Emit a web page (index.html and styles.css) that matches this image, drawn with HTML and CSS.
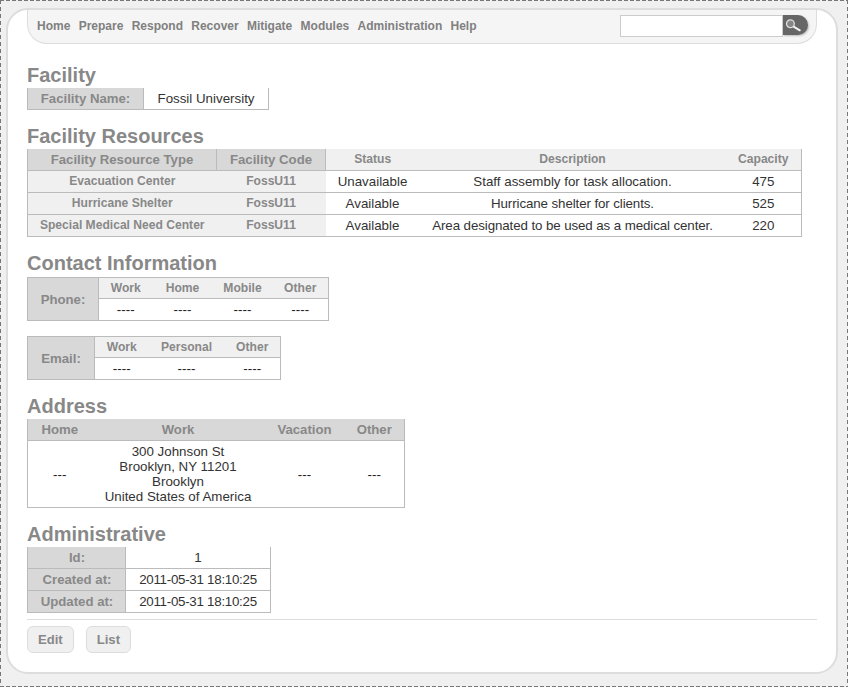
FILE: index.html
```html
<!DOCTYPE html>
<html lang="en">
<head>
    <meta charset="UTF-8">
    <meta name="viewport" content="width=device-width, initial-scale=1.0">
    <title>Facility</title>
    <link rel="stylesheet" href="styles.css">
</head>
<body>
    <div id="page">
        <div id="nav">
            <ul id="menu">
                <li>Home</li>
                <li>Prepare</li>
                <li>Respond</li>
                <li>Recover</li>
                <li>Mitigate</li>
                <li>Modules</li>
                <li>Administration</li>
                <li>Help</li>
            </ul>
            <form id="search">
                <input type="text" id="searchBox">
                <button type="button" id="searchButton" aria-label="Search">
                    <svg width="25" height="20" viewBox="0 0 25 20">
                        <circle cx="7.4" cy="8.7" r="3.9" fill="#858585" stroke="#ddd" stroke-width="1.3"/>
                        <path d="M11 11.8 L16.8 15.3" stroke="#f2f2f2" stroke-width="2" stroke-linecap="round"/>
                    </svg>
                </button>
            </form>
        </div>

        <h2>Facility</h2>
        <table class="info name-table">
            <colgroup><col class="c116"><col class="c125"></colgroup>
            <tr><th class="label">Facility Name:</th><td>Fossil University</td></tr>
        </table>

        <h2>Facility Resources</h2>
        <table class="info wide">
            <colgroup><col class="c189"><col class="c109"><col class="c94"><col class="c306"><col class="c76"></colgroup>
            <tr>
                <th class="label">Facility Resource Type</th>
                <th class="label">Facility Code</th>
                <th class="small">Status</th>
                <th class="small">Description</th>
                <th class="small">Capacity</th>
            </tr>
            <tr><th class="small">Evacuation Center</th><th class="small">FossU11</th><td>Unavailable</td><td>Staff assembly for task allocation.</td><td>475</td></tr>
            <tr><th class="small">Hurricane Shelter</th><th class="small">FossU11</th><td>Available</td><td class="tight">Hurricane shelter for clients.</td><td>525</td></tr>
            <tr><th class="small">Special Medical Need Center</th><th class="small">FossU11</th><td>Available</td><td class="tight">Area designated to be used as a medical center.</td><td>220</td></tr>
        </table>

        <h2>Contact Information</h2>
        <table class="info contact phone">
            <colgroup><col class="c71"><col class="c54"><col class="c60"><col class="c60"><col class="c56"></colgroup>
            <tr>
                <th class="label side" rowspan="2">Phone:</th>
                <th class="small">Work</th><th class="small">Home</th><th class="small">Mobile</th><th class="small">Other</th>
            </tr>
            <tr><td class="dash">----</td><td class="dash">----</td><td class="dash">----</td><td class="dash">----</td></tr>
        </table>
        <table class="info contact email">
            <colgroup><col class="c67"><col class="c54"><col class="c76"><col class="c56"></colgroup>
            <tr>
                <th class="label side" rowspan="2">Email:</th>
                <th class="small">Work</th><th class="small">Personal</th><th class="small">Other</th>
            </tr>
            <tr><td class="dash">----</td><td class="dash">----</td><td class="dash">----</td></tr>
        </table>

        <h2>Address</h2>
        <table class="info address">
            <colgroup><col class="c64"><col class="c173"><col class="c80"><col class="c60"></colgroup>
            <tr><th class="label">Home</th><th class="label">Work</th><th class="label">Vacation</th><th class="label">Other</th></tr>
            <tr>
                <td class="dash">---</td>
                <td>300 Johnson St<br>Brooklyn, NY 11201<br>Brooklyn<br>United States of America</td>
                <td class="dash">---</td>
                <td class="dash">---</td>
            </tr>
        </table>

        <h2>Administrative</h2>
        <table class="info admin">
            <colgroup><col class="c98"><col class="c145"></colgroup>
            <tr><th class="label">Id:</th><td>1</td></tr>
            <tr><th class="label">Created at:</th><td class="date">2011-05-31 18:10:25</td></tr>
            <tr><th class="label">Updated at:</th><td class="date">2011-05-31 18:10:25</td></tr>
        </table>

        <div id="actions">
            <a class="btn">Edit</a>
            <a class="btn">List</a>
        </div>
    </div>
</body>
</html>
```

FILE: styles.css
```css
html, body { margin: 0; padding: 0; }
body {
    box-sizing: border-box;
    height: 687px;
    padding: 8px 10px 13px 6px;
    background-color: #f0f0f0;
    background-image:
        repeating-linear-gradient(to right, #777 0 4px, transparent 4px 6px),
        repeating-linear-gradient(to right, #777 0 4px, transparent 4px 6px),
        repeating-linear-gradient(to bottom, #777 0 4px, transparent 4px 7px),
        repeating-linear-gradient(to bottom, #777 0 4px, transparent 4px 7px);
    background-size: 100% 1px, 100% 1px, 1px 100%, 1px 100%;
    background-position: 0 0, 0 100%, 0 0, 100% 0;
    background-repeat: no-repeat;
    font-family: "Liberation Sans", Arial, sans-serif;
    font-size: 13.33px;
    color: #333;
    overflow: hidden;
}
#page {
    box-sizing: border-box;
    height: 666px;
    padding: 0 19px;
    background-color: #fff;
    border: 2px solid #ddd;
    border-radius: 22px;
}
#nav {
    display: flex;
    justify-content: space-between;
    box-sizing: border-box;
    height: 34px;
    padding: 5px 8px 0 9px;
    background-color: #f5f5f5;
    border: 1px solid #ddd;
    border-top: 0;
    border-radius: 0 0 20px 20px;
}
#menu { display: flex; gap: 8.3px; margin: 0; padding: 4px 0 0; list-style: none; font-size: 12px; font-weight: bold; line-height: 15px; color: #808080; }
#search { display: flex; margin: 0; }
#searchBox { box-sizing: border-box; width: 163px; height: 22px; margin: 0; padding: 0; background-color: #fff; border: 1px solid #ccc; }
#searchButton { box-sizing: border-box; width: 25px; height: 20px; margin: 0; padding: 0; line-height: 0; background-color: #666; border: 0; border-radius: 0 10px 10px 0; box-shadow: 1px 1px 2px #bbb; }
h2 { margin: 15px 0 1px; font-size: 20px; line-height: 23px; color: #888; }
#nav + h2 { margin-top: 20px; }

table.info { table-layout: fixed; border-collapse: collapse; border: 1px solid #bbb; border-top: 0; }
.name-table { width: 241px; }
.wide { width: 774px; }
.phone { width: 301px; }
.email { width: 253px; }
.address { width: 377px; }
.admin { width: 243px; }
.c54 { width: 54px; } .c56 { width: 56px; } .c60 { width: 60px; } .c64 { width: 64px; }
.c67 { width: 67px; } .c71 { width: 71px; } .c76 { width: 76px; } .c80 { width: 80px; }
.c94 { width: 94px; } .c98 { width: 98px; } .c109 { width: 109px; } .c116 { width: 116px; }
.c125 { width: 125px; } .c145 { width: 145px; } .c173 { width: 173px; } .c189 { width: 189px; }
.c306 { width: 306px; }

.info th, .info td { padding: 3px 0; line-height: 15px; text-align: center; white-space: nowrap; border-bottom: 1px solid #bbb; }
.info td { font-size: 13.33px; color: #333; background-color: #fff; }
.info td.tight { letter-spacing: -0.1px; }
.info td.date { letter-spacing: -0.27px; }
.info th { color: #888; font-weight: bold; }
.info th.label { font-size: 13.2px; background-color: #d8d8d8; border-right: 1px solid #bbb; }
.info th.small { font-size: 12.1px; background-color: #f0f0f0; }
.info .dash { color: #222; }
table.contact { margin-top: 2px; border-top: 1px solid #bbb; }
.contact + .contact { margin-top: 15px; }
.contact th.small { padding-bottom: 2px; }
.address th.label { border-right: 0; }
.admin th.label { padding-left: 1px; }
#actions { display: flex; gap: 12px; margin-top: 6px; padding-top: 6px; border-top: 1px solid #ddd; }
.btn { box-sizing: border-box; padding: 5px 10px; line-height: 15px; font-size: 13.1px; font-weight: bold; color: #888; background-color: #f0f0f0; border: 1px solid #ddd; border-radius: 6px; }
```
